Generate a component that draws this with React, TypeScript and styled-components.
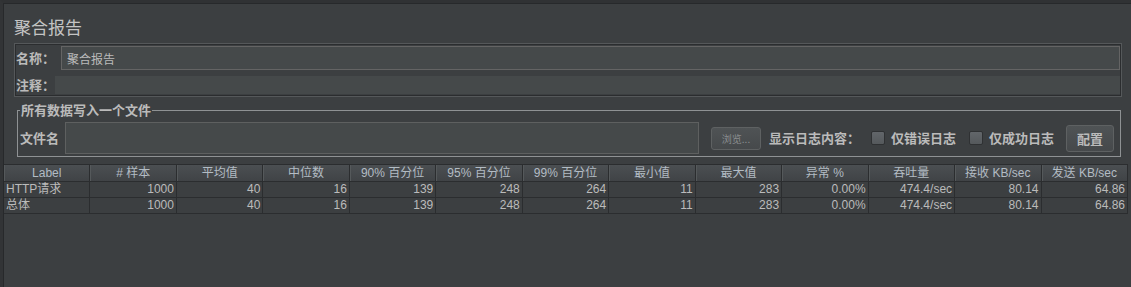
import React from "react";
import styled, { createGlobalStyle } from "styled-components";

const GlobalStyle = createGlobalStyle`
  html, body { margin: 0; padding: 0; background: #3c3f41; }
  * { box-sizing: border-box; }
`;

const FONT = `"Liberation Sans", "Noto Sans CJK SC", sans-serif`;

const Frame = styled.div`
  width: 1131px;
  height: 287px;
  background: #3c3f41;
  border-top: 3px solid #303234;
  border-left: 3px solid #323436;
  box-shadow: inset 1px 1px 0 #27292b;
  font-family: ${FONT};
  color: #bbbbbb;
  overflow: hidden;
  display: flex;
  flex-direction: column;
`;

const Top = styled.div`
  padding: 0 10px 0 11px;
  display: flex;
  flex-direction: column;
`;

const Title = styled.div`
  margin-top: 14px;
  font-family: "Noto Sans CJK SC", sans-serif;
  font-size: 17px;
  line-height: 20px;
  height: 20px;
  color: #c4c4c4;
`;

const NamePanel = styled.div`
  margin: 7px 0 0 1px;
  border: 1px solid #2b2d2f;
  box-shadow: 0 0 0 1px #55585a;
  padding: 1px 0 1px 0;
  display: flex;
  flex-direction: column;
  gap: 6px;
`;

const FieldRow = styled.div<{ $h: number }>`
  display: flex;
  align-items: center;
  height: ${(p) => p.$h}px;
`;

const BoldLabel = styled.span<{ $w?: number; $ml?: number }>`
  font-family: "Noto Sans CJK SC", sans-serif;
  font-weight: 700;
  font-size: 13px;
  line-height: 16px;
  color: #bbbbbb;
  white-space: nowrap;
  flex: none;
  ${(p) => (p.$w ? `width: ${p.$w}px;` : "")}
  margin-left: ${(p) => p.$ml ?? 0}px;
`;

const TextField = styled.div`
  flex: 1;
  align-self: stretch;
  background: #45494a;
  border: 1px solid #646464;
  display: flex;
  align-items: center;
  padding-left: 5px;
  font-family: "Noto Sans CJK SC", sans-serif;
  font-size: 12px;
  color: #bbbbbb;
`;

const TextArea = styled.div`
  flex: 1;
  align-self: stretch;
  background: #45494a;
`;

const FileSet = styled.fieldset`
  margin: 6px 0 0 3px;
  padding: 4px 0 2px 2px;
  border: 1px solid #8f9294;
  min-width: 0;
`;

const Legend = styled.legend`
  padding: 0 1px;
  margin-left: 0;
  font-family: "Noto Sans CJK SC", sans-serif;
  font-weight: 700;
  font-size: 13px;
  line-height: 16px;
  color: #bbbbbb;
`;

const FileRow = styled.div`
  display: flex;
  align-items: center;
  height: 32px;
`;

const FileField = styled.div`
  width: 634px;
  height: 32px;
  background: #45494a;
  border: 1px solid #5e6060;
  flex: none;
`;

const Button = styled.div<{ $w: number; $h: number; $ml: number; $dim?: boolean }>`
  width: ${(p) => p.$w}px;
  height: ${(p) => p.$h}px;
  margin-left: ${(p) => p.$ml}px;
  flex: none;
  border: 1px solid #5e6162;
  border-radius: 3px;
  background: linear-gradient(#4f5355, #46494b);
  display: flex;
  align-items: center;
  justify-content: center;
  font-family: "Noto Sans CJK SC", sans-serif;
  font-size: ${(p) => (p.$dim ? 10 : 13)}px;
  font-weight: ${(p) => (p.$dim ? 400 : 700)};
  color: ${(p) => (p.$dim ? "#8a8d8f" : "#bbbbbb")};
`;

const Check = styled.div<{ $ml: number }>`
  width: 14px;
  height: 14px;
  margin-left: ${(p) => p.$ml}px;
  margin-right: 6px;
  flex: none;
  border: 1px solid #2f3133;
  border-radius: 2px;
  background: linear-gradient(#62666a, #55595c);
`;

const Table = styled.div`
  margin: 7px 0 0 1px;
  width: 1124px;
  display: flex;
  flex-direction: column;
`;

const Grid = styled.div`
  display: grid;
  grid-template-columns: repeat(13, 1fr);
`;

const Head = styled.div`
  height: 18px;
  border-top: 1px solid #2b2d2f;
  border-bottom: 1px solid #2b2d2f;
  border-right: 1px solid #2b2d2f;
  box-shadow: inset 1px 0 #55595b;
  background: linear-gradient(#4b4f52, #404346);
  text-align: center;
  font-size: 12px;
  line-height: 16px;
  color: #b3bcc4;
  white-space: nowrap;
  overflow: hidden;
`;

const Cell = styled.div<{ $left?: boolean }>`
  height: 16px;
  border-bottom: 1px solid #2b2d2f;
  border-right: 1px solid #2b2d2f;
  font-size: 12px;
  line-height: 15px;
  color: #bbbbbb;
  text-align: ${(p) => (p.$left ? "left" : "right")};
  padding: 0 2px 0 2px;
  white-space: nowrap;
  overflow: hidden;
`;

const headers = [
  "Label",
  "# 样本",
  "平均值",
  "中位数",
  "90% 百分位",
  "95% 百分位",
  "99% 百分位",
  "最小值",
  "最大值",
  "异常 %",
  "吞吐量",
  "接收 KB/sec",
  "发送 KB/sec",
];

const rows = [
  ["HTTP请求", "1000", "40", "16", "139", "248", "264", "11", "283", "0.00%", "474.4/sec", "80.14", "64.86"],
  ["总体", "1000", "40", "16", "139", "248", "264", "11", "283", "0.00%", "474.4/sec", "80.14", "64.86"],
];

export default function App() {
  return (
    <>
      <GlobalStyle />
      <Frame>
        <Top>
          <Title>聚合报告</Title>
          <NamePanel>
            <FieldRow $h={24}>
              <BoldLabel $w={45}>名称：</BoldLabel>
              <TextField>聚合报告</TextField>
            </FieldRow>
            <FieldRow $h={18}>
              <BoldLabel $w={39}>注释：</BoldLabel>
              <TextArea />
            </FieldRow>
          </NamePanel>
          <FileSet>
            <Legend>所有数据写入一个文件</Legend>
            <FileRow>
              <BoldLabel $w={45}>文件名</BoldLabel>
              <FileField />
              <Button $w={50} $h={23} $ml={12} $dim>
                浏览...
              </Button>
              <BoldLabel $ml={8}>显示日志内容：</BoldLabel>
              <Check $ml={11} />
              <BoldLabel>仅错误日志</BoldLabel>
              <Check $ml={13} />
              <BoldLabel>仅成功日志</BoldLabel>
              <Button $w={48} $h={27} $ml={12}>
                配置
              </Button>
            </FileRow>
          </FileSet>
        </Top>
        <Table>
          <Grid>
            {headers.map((h) => (
              <Head key={h}>{h}</Head>
            ))}
          </Grid>
          {rows.map((r, i) => (
            <Grid key={i}>
              {r.map((c, j) => (
                <Cell key={j} $left={j === 0}>
                  {c}
                </Cell>
              ))}
            </Grid>
          ))}
        </Table>
      </Frame>
    </>
  );
}
